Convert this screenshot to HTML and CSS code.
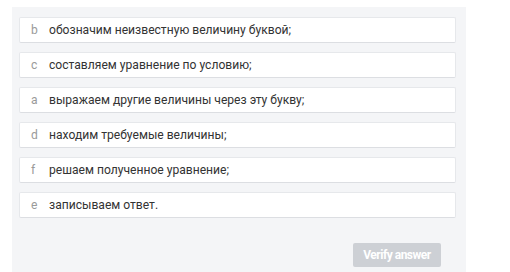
FILE: index.html
```html
<!DOCTYPE html>
<html lang="en">
<head>
  <meta charset="UTF-8" />
  <meta name="viewport" content="width=device-width, initial-scale=1.0"/>
  <title>Order the steps</title>
  <link rel="stylesheet" href="styles.css">
</head>
<body>
  <div class="task">
    <ul class="steps">
      <li class="step"><span class="key">b</span>обозначим неизвестную величину буквой;</li>
      <li class="step"><span class="key">c</span>составляем уравнение по условию;</li>
      <li class="step"><span class="key">a</span>выражаем другие величины через эту букву;</li>
      <li class="step"><span class="key">d</span>находим требуемые величины;</li>
      <li class="step"><span class="key">f</span>решаем полученное уравнение;</li>
      <li class="step"><span class="key">e</span>записываем ответ.</li>
    </ul>

    <div class="actions">
      <button disabled>Verify answer</button>
    </div>
  </div>
</body>
</html>
```

FILE: styles.css
```css
body {
  margin: 0;
  background: #fff;
  font-family: Roboto, 'Liberation Sans', sans-serif;
}

.task {
  margin: 7px 0 0 12px;
  width: 454px;
  height: 265px;
  box-sizing: border-box;
  padding: 10px 10px 0 7px;
  background: #f4f5f7;
}

.steps {
  list-style: none;
  margin: 0;
  padding: 0;
  display: flex;
  flex-direction: column;
  gap: 9px;
}

.step {
  height: 26px;
  box-sizing: border-box;
  display: flex;
  align-items: center;
  padding-left: 11px;
  background: #fff;
  border: 1px solid #e6e8eb;
  border-bottom-color: #dcdee2;
  border-radius: 2px;
  font-size: 12.1px;
  color: #333;
}

.key {
  width: 18px;
  color: #9a9a9a;
}

.actions {
  display: flex;
  justify-content: flex-end;
  margin-top: 25px;
  padding-right: 15px;
}

button {
  width: 88px;
  height: 24px;
  border: none;
  border-radius: 2px;
  background: #cdd0d5;
  color: #fff;
  font-family: Roboto, sans-serif;
  font-weight: bold;
  font-size: 12px;
  letter-spacing: -0.5px;
  padding: 0;
}
```
